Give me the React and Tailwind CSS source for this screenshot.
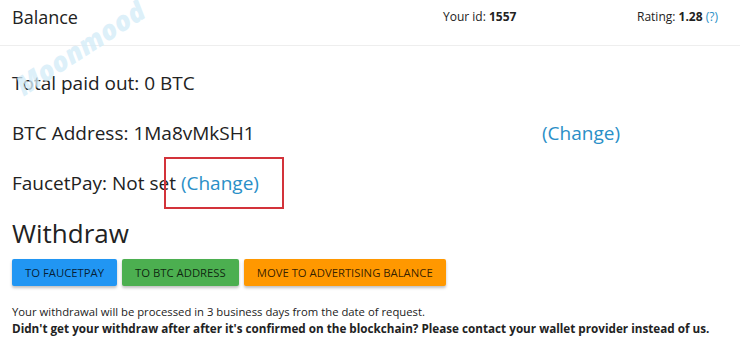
export default function App() {
  return (
    <div className="relative h-[350px] w-[740px] overflow-hidden bg-white font-['Open_Sans',sans-serif] text-[#222]">
      {/* header */}
      <div className="flex h-[46px] items-start border-b border-[#eee] pl-3 pt-[4px]">
        <h2 className="w-[431px] text-[18px] leading-[26px]">Balance</h2>
        <div className="w-[194px] pt-[5px] text-[12px] leading-[16px]">
          Your id: <b>1557</b>
        </div>
        <div className="pt-[5px] text-[12px] leading-[16px]">
          Rating: <b>1.28</b> <span className="text-[#2a8fc7]">(?)</span>
        </div>
      </div>

      <div className="pl-3 text-[19px] leading-[28px]">
        <p className="mt-[23px]">Total paid out: 0 BTC</p>
        <p className="mt-[22px] flex">
          <span className="w-[530px]">BTC Address: 1Ma8vMkSH1</span>
          <a className="text-[#2a8fc7]">(Change)</a>
        </p>
        <p className="mt-[22px]">
          FaucetPay: Not set <a className="text-[#2a8fc7]">(Change)</a>
        </p>
        <h1 className="mt-[19px] text-[26px] leading-[34px]">Withdraw</h1>

        <div className="mt-[9px] flex gap-[5px] text-[11.3px] leading-[27px] text-black/80">
          <button className="h-[27px] rounded-[2px] bg-[#2196f3] px-[13px] shadow-[0_2px_3px_rgba(0,0,0,0.25)]">
            TO FAUCETPAY
          </button>
          <button className="h-[27px] rounded-[2px] bg-[#4caf50] px-[13px] shadow-[0_2px_3px_rgba(0,0,0,0.25)]">
            TO BTC ADDRESS
          </button>
          <button className="h-[27px] rounded-[2px] bg-[#ff9800] px-[13px] shadow-[0_2px_3px_rgba(0,0,0,0.25)]">
            MOVE TO ADVERTISING BALANCE
          </button>
        </div>

        <p className="mt-[17px] text-[11.3px] leading-[17px]">
          Your withdrawal will be processed in 3 business days from the date of request.
        </p>
        <p className="text-[11.7px] font-bold leading-[17px]">
          Didn't get your withdraw after after it's confirmed on the blockchain? Please contact your wallet provider instead of us.
        </p>
      </div>

      {/* annotation box */}
      <div className="absolute left-[164px] top-[157px] h-[52px] w-[120px] border-2 border-[#d3333a]" />

      {/* watermark */}
      <div className="pointer-events-none absolute left-[6px] top-[30px] -rotate-[33deg] text-[27px] font-extrabold italic leading-[36px] text-[#d4ecf8]/80">
        Moonmood
      </div>
    </div>
  );
}
